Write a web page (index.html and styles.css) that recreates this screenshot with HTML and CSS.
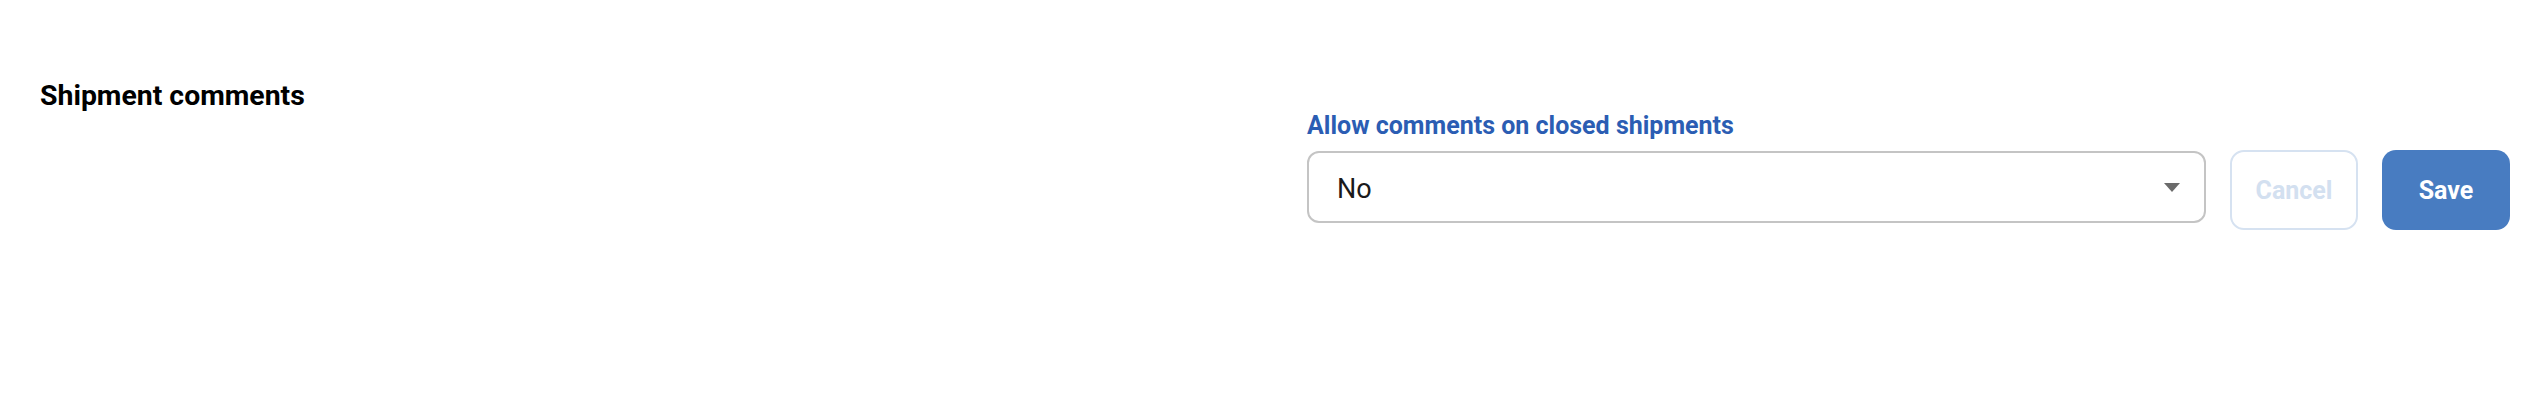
FILE: index.html
```html
<!DOCTYPE html>
<html lang="en">
  <head>
    <meta charset="UTF-8" />
    <meta name="viewport" content="width=device-width, initial-scale=1.0" />
    <title>Shipment comments</title>
    <link rel="stylesheet" href="styles.css">
  </head>
  <body>
    <div class="section">
      <h2 class="section-title">Shipment comments</h2>

      <div class="field">
        <label class="field-label" for="allowComments">Allow comments on closed shipments</label>
        <div class="field-row">
          <div class="select-wrap">
            <select id="allowComments" class="select">
              <option>No</option>
              <option>Yes</option>
            </select>
            <span class="select-arrow"></span>
          </div>
          <button class="btn btn-cancel" disabled>Cancel</button>
          <button class="btn btn-save">Save</button>
        </div>
      </div>
    </div>
  </body>
</html>
```

FILE: styles.css
```css
body {
  font-family: Roboto, "Liberation Sans", sans-serif;
  margin: 0;
  padding: 0;
  background: #fff;
  color: #000;
}

.section {
  display: flex;
  padding: 79px 14px 0 40px;
}

.section-title {
  width: 1267px;
  flex: none;
  margin: 0;
  font-size: 28.4px;
  font-weight: 700;
  line-height: 33px;
}

.field {
  flex: 1;
  padding-top: 32px;
}

.field-label {
  display: block;
  color: #2b5db3;
  font-size: 25px;
  font-weight: 700;
  line-height: 30px;
  margin-bottom: 10px;
}

.field-row {
  display: flex;
  align-items: flex-start;
  gap: 24px;
}

.select-wrap {
  position: relative;
  flex: 1;
}

.select {
  display: block;
  width: 100%;
  height: 72px;
  margin: 0;
  padding: 3px 60px 0 28px;
  border: 2px solid #c4c4c4;
  border-radius: 12px;
  background: #fff;
  font-family: inherit;
  font-size: 27px;
  color: #1a1a1a;
  appearance: none;
  -webkit-appearance: none;
  outline: none;
}

.select-arrow {
  position: absolute;
  right: 26px;
  top: 32px;
  width: 0;
  height: 0;
  border-left: 8px solid transparent;
  border-right: 8px solid transparent;
  border-top: 9px solid #6b6b6b;
  pointer-events: none;
}

.btn {
  width: 128px;
  height: 80px;
  margin-top: -1px;
  padding: 0;
  border-radius: 14px;
  font-family: inherit;
  font-size: 25px;
  font-weight: 700;
  cursor: pointer;
}

.btn-cancel {
  background: #fff;
  border: 2px solid #d6e2f1;
  color: #d3e0f0;
  cursor: default;
}

.btn-save {
  background: #487cc1;
  border: none;
  color: #fff;
}
```
